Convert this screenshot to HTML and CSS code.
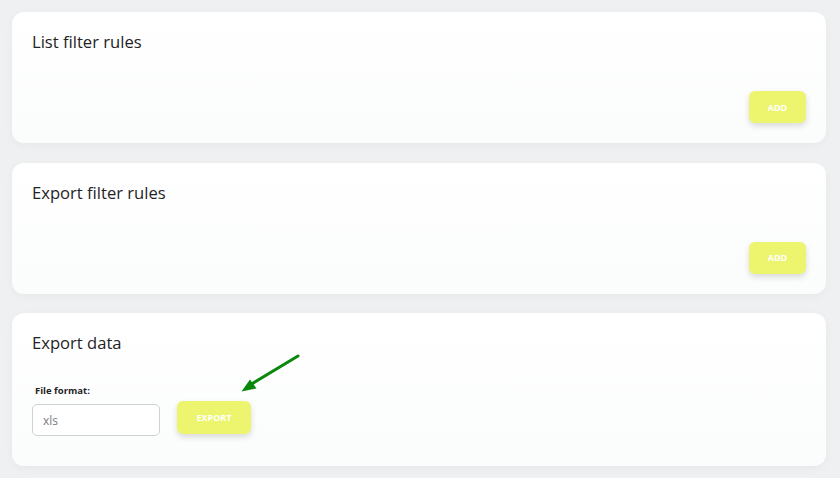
FILE: index.html
```html
<!DOCTYPE html>
<html lang="en">
<head>
  <meta charset="UTF-8" />
  <meta name="viewport" content="width=device-width, initial-scale=1.0"/>
  <title>Filter settings</title>
  <link rel="stylesheet" href="styles.css">
</head>
<body>
  <div class="page">
    <section class="card">
      <h2>List filter rules</h2>
      <div class="actions">
        <button class="btn">Add</button>
      </div>
    </section>

    <section class="card">
      <h2>Export filter rules</h2>
      <div class="actions">
        <button class="btn">Add</button>
      </div>
    </section>

    <section class="card export-card">
      <h2>Export data</h2>
      <div class="export-form">
        <div class="field">
          <label for="format">File format:</label>
          <input type="text" id="format" placeholder="xls" />
        </div>
        <button class="btn btn-export">Export</button>
      </div>
      <svg class="hint-arrow" width="64" height="44" viewBox="0 0 64 44">
        <line x1="60" y1="6" x2="12" y2="35" stroke="#0b870b" stroke-width="3" stroke-linecap="round"/>
        <polygon points="3.5,41.5 12,29.5 18.5,38.5" fill="#0b870b"/>
      </svg>
    </section>
  </div>
</body>
</html>
```

FILE: styles.css
```css
* {
  margin: 0;
  padding: 0;
  box-sizing: border-box;
  font-family: 'Open Sans', sans-serif;
}

body {
  background: #eff0f2;
  min-height: 100vh;
}

.page {
  display: flex;
  flex-direction: column;
  gap: 19.5px;
  padding: 12px 14px 12px 12px;
}

.card {
  position: relative;
  background: linear-gradient(180deg, #ffffff, #fbfcfc);
  border-radius: 12px;
  padding: 18px 20px 20px 20px;
  box-shadow: 0 2px 8px rgba(0, 0, 0, 0.04);
}

.card h2 {
  font-size: 16.6px;
  font-weight: 400;
  line-height: 24px;
  color: #1f2326;
}

.actions {
  display: flex;
  justify-content: flex-end;
  margin-top: 37px;
}

.btn {
  height: 32px;
  width: 57px;
  border: none;
  border-radius: 6px;
  background: #edf56f;
  color: #ffffff;
  font-size: 9px;
  font-weight: 700;
  text-transform: uppercase;
  box-shadow: 0 3px 6px rgba(0, 0, 0, 0.14);
  cursor: pointer;
}

.export-card {
  padding-bottom: 30px;
}

.export-form {
  display: flex;
  align-items: flex-end;
  gap: 17px;
  margin-top: 29px;
}

.field label {
  display: block;
  font-size: 9.5px;
  font-weight: 700;
  line-height: 14px;
  color: #1f2326;
  margin-bottom: 6px;
  padding-left: 3px;
}

.field input {
  width: 128px;
  height: 32px;
  padding: 0 10px;
  font-size: 12px;
  border: 1px solid #cfd2d4;
  border-radius: 5px;
  outline: none;
  background: #fff;
  color: #333;
}

.field input::placeholder {
  color: #7a7d80;
}

.btn-export {
  width: 74px;
  height: 33px;
  margin-bottom: 2px;
}

.hint-arrow {
  position: absolute;
  left: 226px;
  top: 37px;
}
```
